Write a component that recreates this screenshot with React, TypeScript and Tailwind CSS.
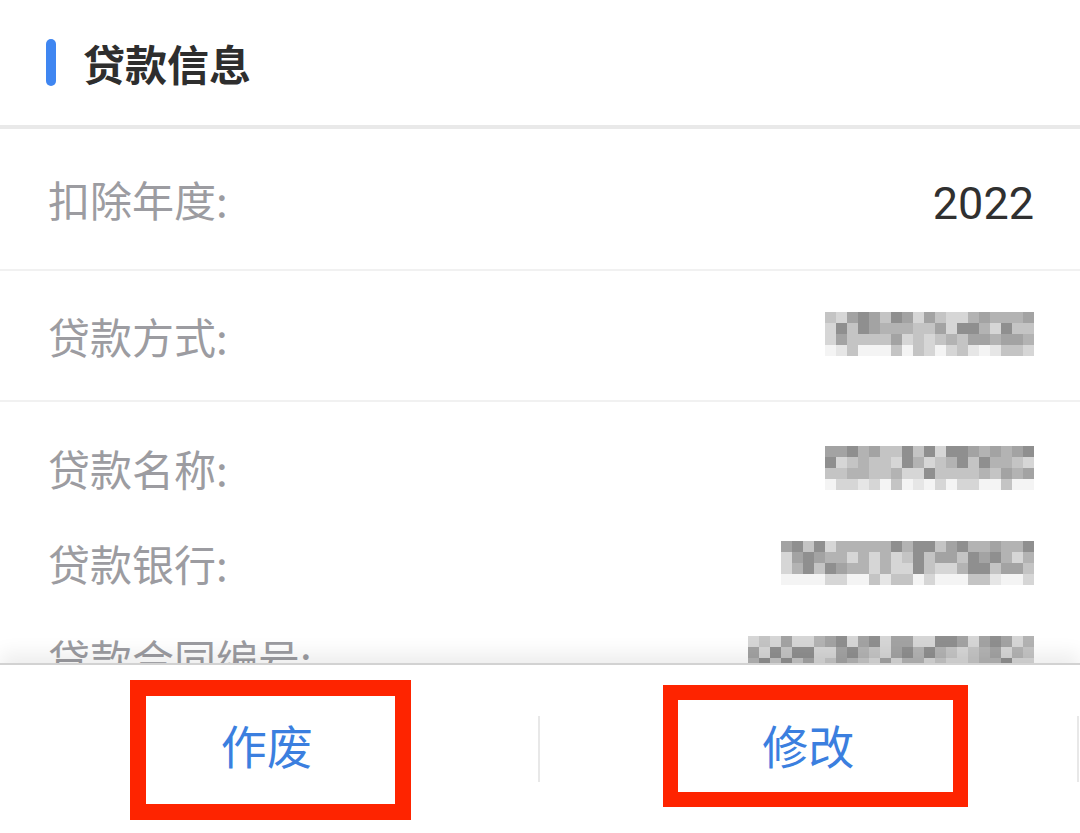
import React from "react";

const cjk = "font-['Noto_Sans_CJK_SC','Noto_Sans',sans-serif]";

// deterministic grey cells for the mosaic-blurred values
const shades = ["#8f8f8f", "#a3a3a3", "#b3b3b3", "#c4c4c4", "#d6d6d6", "#e6e6e6", "#f4f4f4"];

const Mosaic = ({
  cols,
  rows,
  seed,
  cell = 11,
}: {
  cols: number;
  rows: number;
  seed: number;
  cell?: number;
}) => {
  let s = seed;
  const rnd = () => {
    s = (s * 9301 + 49297) % 233280;
    return s / 233280;
  };
  const cells: string[] = [];
  for (let r = 0; r < rows; r++) {
    for (let c = 0; c < cols; c++) {
      const edge = r === rows - 1 ? 3 : 0;
      const idx = Math.min(shades.length - 1, Math.floor(rnd() * 5) + edge);
      cells.push(shades[idx]);
    }
  }
  return (
    <div
      className="grid"
      style={{ gridTemplateColumns: `repeat(${cols}, ${cell}px)`, gridAutoRows: `${cell}px` }}
    >
      {cells.map((bg, i) => (
        <div key={i} style={{ backgroundColor: bg }} />
      ))}
    </div>
  );
};

const Row = ({
  label,
  children,
  className = "",
}: {
  label: string;
  children: React.ReactNode;
  className?: string;
}) => (
  <div className={`flex items-center justify-between pl-[48px] pr-[46px] ${className}`}>
    <span className="text-[42px] leading-none text-[#9c9ca1]">{label}</span>
    {children}
  </div>
);

const RedBox = ({ className }: { className: string }) => (
  <div className={`absolute border-[#fe2400] pointer-events-none ${className}`} />
);

export default function App() {
  return (
    <div className={`w-[1080px] h-[833px] bg-white flex flex-col overflow-hidden ${cjk}`}>
      {/* header */}
      <div className="h-[125px] flex items-center pl-[46px] shrink-0">
        <div className="w-[10px] h-[47px] rounded-full bg-[#3f86f1]" />
        <h2 className="ml-[27px] text-[42px] font-bold text-[#2e2e2e] leading-none">贷款信息</h2>
      </div>
      <div className="h-[4px] bg-[#e9e9e9] shrink-0" />

      {/* details */}
      <div className="flex-1 overflow-hidden">
        <Row label="扣除年度:" className="h-[142px] border-b-2 border-[#f1f1f1]">
          <span className="mt-[8px] font-['Roboto',sans-serif] text-[45px] leading-none text-[#303030]">
            2022
          </span>
        </Row>
        <Row label="贷款方式:" className="h-[131px] border-b-2 border-[#f1f1f1]">
          <div className="mt-[-4px]">
            <Mosaic cols={19} rows={4} seed={11} />
          </div>
        </Row>
        <div className="pt-[18px]">
          <Row label="贷款名称:" className="h-[95px]">
            <Mosaic cols={19} rows={4} seed={27} />
          </Row>
          <Row label="贷款银行:" className="h-[95px]">
            <Mosaic cols={23} rows={4} seed={53} />
          </Row>
          <Row label="贷款合同编号:" className="h-[95px]">
            <Mosaic cols={26} rows={4} seed={91} />
          </Row>
        </div>
      </div>

      {/* action bar */}
      <div className="relative z-10 h-[170px] shrink-0 flex items-center border-t-2 border-[#d2d2d2] bg-white shadow-[0_-10px_18px_rgba(0,0,0,0.07)]">
        <div className="relative flex-1 h-full flex items-center justify-center">
          <span className="text-[46px] leading-none text-[#3b7fdf] mt-[-10px] ml-[-4px]">作废</span>
          <RedBox className="left-[130px] top-[15px] w-[281px] h-[140px] border-[16px]" />
        </div>
        <div className="w-[2px] h-[66px] bg-[#e8e8e8]" />
        <div className="relative flex-1 h-full flex items-center justify-center">
          <span className="text-[46px] leading-none text-[#3b7fdf] mt-[-10px]">修改</span>
          <RedBox className="left-[123px] top-[20px] w-[305px] h-[122px] border-[15px]" />
        </div>
        <div className="w-[2px] h-[66px] bg-[#e8e8e8]" />
        <div className="w-px" />
      </div>
    </div>
  );
}
